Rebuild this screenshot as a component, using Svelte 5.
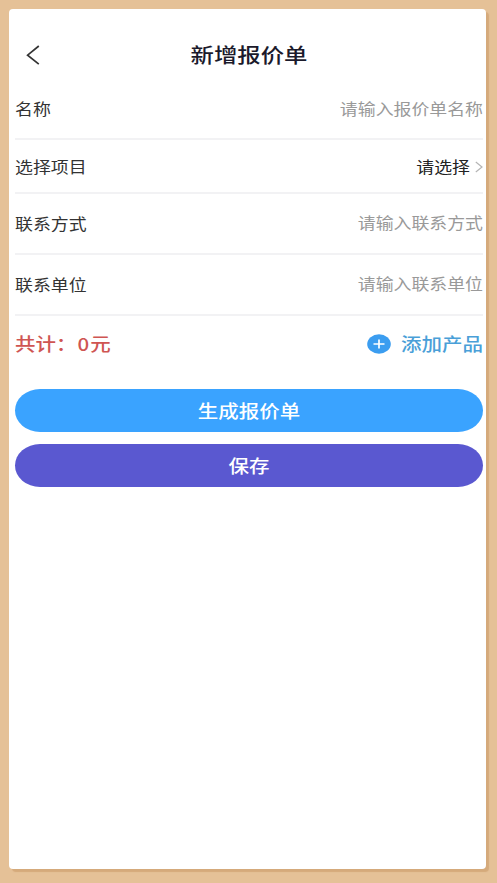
<script>
  let fields = [
    { label: '名称', value: '请输入报价单名称', height: 57, first: true },
    { label: '选择项目', value: '请选择', height: 54, select: true },
    { label: '联系方式', value: '请输入联系方式', height: 61 },
    { label: '联系单位', value: '请输入联系单位', height: 61 }
  ];

  let total = 0;
</script>

<div class="page">
  <div class="card">
    <header class="header">
      <svg class="back" viewBox="0 0 14 20" width="14" height="20">
        <path d="M12.8 1 L1.6 10.2 L12.8 19.2" />
      </svg>
      <h1 class="title"><span class="text">新增报价单</span></h1>
    </header>

    {#each fields as field}
      <div class="row" class:first={field.first} style="height: {field.height}px">
        <span class="text label">{field.label}</span>
        <div class="value" class:select={field.select}>
          <span class="text">{field.value}</span>
          {#if field.select}
            <svg class="arrow" viewBox="0 0 8 12" width="8" height="12">
              <path d="M0.8 1 L7 6 L0.8 11" />
            </svg>
          {/if}
        </div>
      </div>
    {/each}

    <div class="summary">
      <span class="text total">共计：<span class="digit">{total}</span>元</span>
      <div class="add">
        <svg viewBox="0 0 24 20" width="24" height="20">
          <ellipse cx="12" cy="10" rx="11.8" ry="9.7" />
          <path d="M6.5 10 H17.5 M12 5.5 V14.5" />
        </svg>
        <span class="text">添加产品</span>
      </div>
    </div>

    <div class="buttons">
      <button class="button create"><span class="text">生成报价单</span></button>
      <button class="button save"><span class="text">保存</span></button>
    </div>
  </div>
</div>

<style>
  :global(body) {
    background: #e5c197;
  }

  .page {
    height: 883px;
    box-sizing: border-box;
    padding: 9px 11px 14px 9px;
    font-family: "Noto Sans CJK SC", sans-serif;
    background: #e5c197;
  }

  .card {
    height: 860px;
    box-sizing: border-box;
    padding: 0 3px 0 6px;
    background: #ffffff;
    border-radius: 4px;
    box-shadow: 3px 3px 1px #d5aa7b;
  }

  /* wide letterforms */
  .text {
    display: inline-block;
    line-height: 24px;
    white-space: nowrap;
    transform: translateY(-1px) scaleY(0.86);
  }

  .header {
    display: grid;
    grid-template-columns: 28px 1fr 28px;
    align-items: center;
    height: 74px;
    padding-top: 18px;
    box-sizing: border-box;
  }

  .back {
    margin-left: 11px;
  }

  .back path {
    fill: none;
    stroke: #333333;
    stroke-width: 1.7;
  }

  .title {
    margin: 0;
    text-align: center;
    font-size: 23.4px;
    font-weight: 500;
    line-height: 24px;
    color: #1b1a2b;
  }

  .row {
    display: flex;
    align-items: center;
    justify-content: space-between;
    box-sizing: border-box;
    border-bottom: 2px solid #f2f2f4;
    font-size: 17.9px;
  }

  .row.first {
    padding-bottom: 3px;
  }

  .label {
    color: #333333;
  }

  .value {
    display: flex;
    align-items: center;
    padding-bottom: 1px;
    color: #999999;
  }

  .value.select {
    padding-bottom: 0;
    color: #222222;
  }

  .row:has(.select) {
    padding-top: 2px;
  }

  .arrow {
    margin-left: 5px;
  }

  .arrow path {
    fill: none;
    stroke: #b5b5b5;
    stroke-width: 1.2;
  }

  .summary {
    display: flex;
    align-items: center;
    justify-content: space-between;
    height: 55px;
    font-size: 20.5px;
    font-weight: 500;
  }

  .total {
    color: #cf5552;
  }

  .digit {
    margin: 0 1px;
  }

  .add {
    display: flex;
    align-items: center;
    gap: 10px;
    color: #4a9fd8;
  }

  .add ellipse {
    fill: #3b9df0;
  }

  .add path {
    fill: none;
    stroke: #ffffff;
    stroke-width: 1.7;
  }

  .buttons {
    display: flex;
    flex-direction: column;
    gap: 12px;
    padding-top: 18px;
  }

  .button {
    height: 43px;
    padding: 0;
    border: none;
    border-radius: 25px / 21.5px;
    font-family: inherit;
    font-size: 20.5px;
    font-weight: 500;
    color: #ffffff;
  }

  .create {
    background: #3aa3ff;
  }

  .save {
    background: #5a58d0;
  }
</style>
